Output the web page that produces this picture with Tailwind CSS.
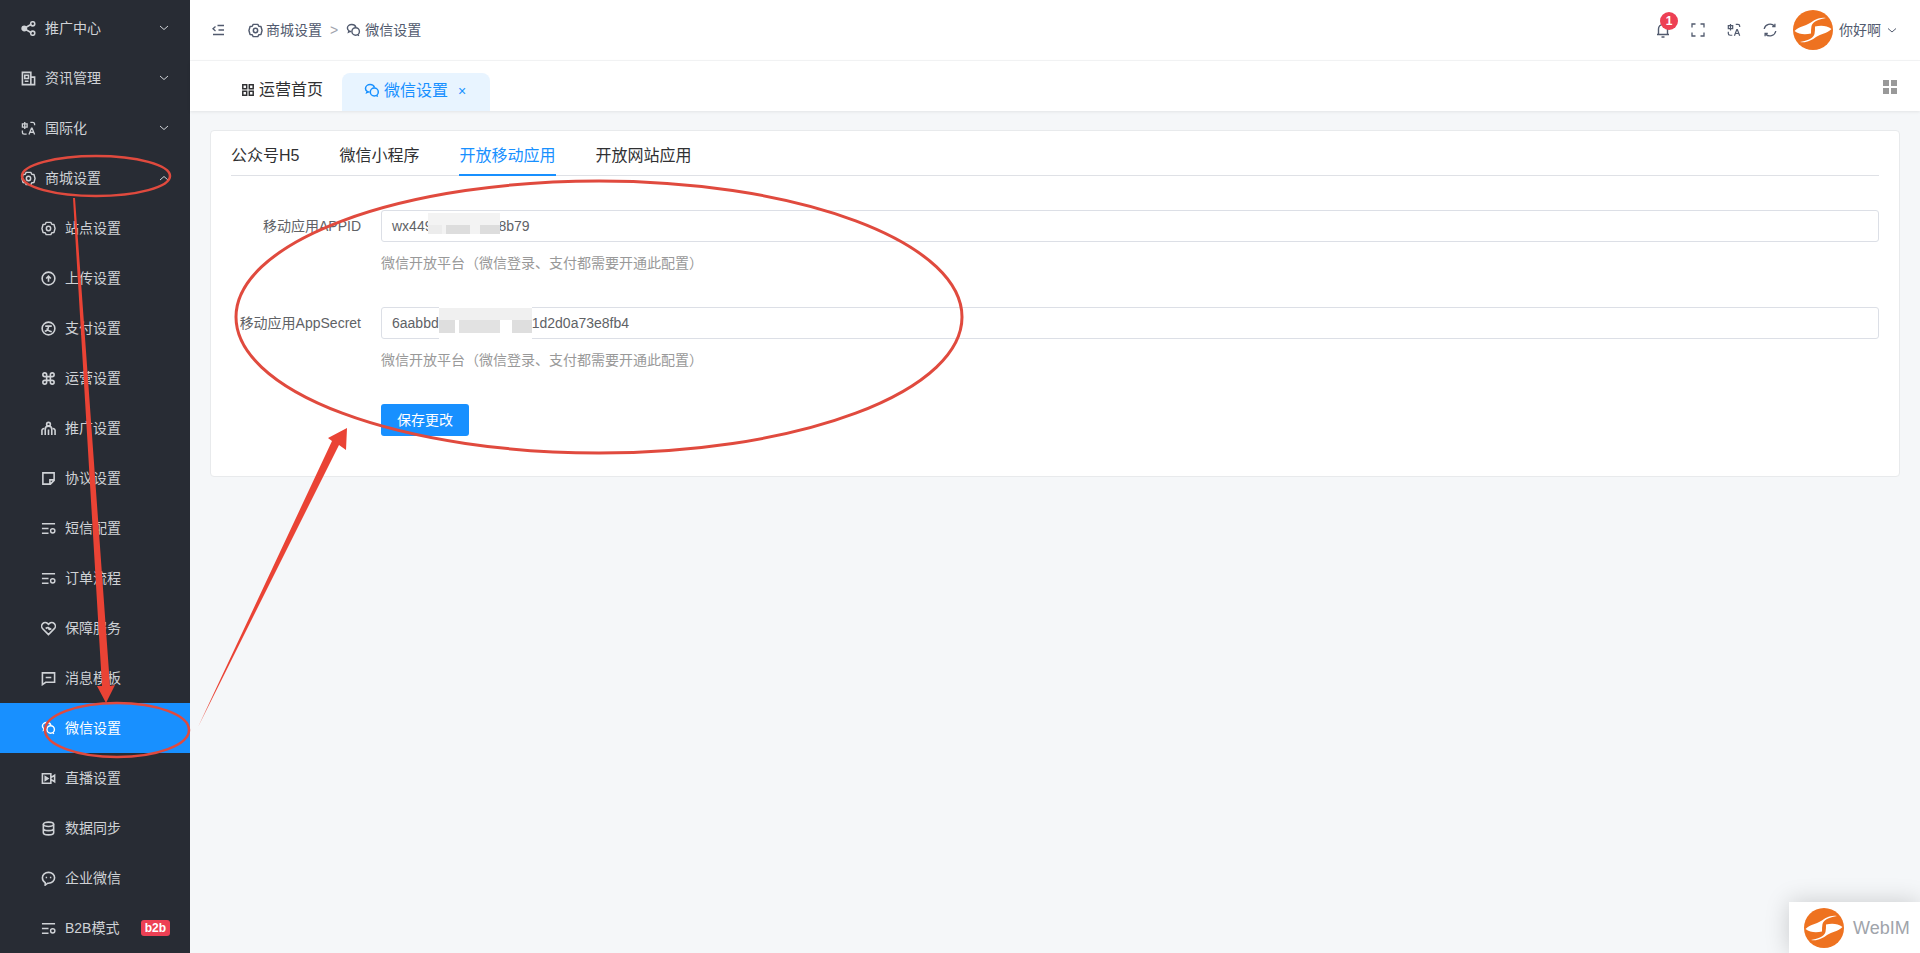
<!DOCTYPE html>
<html lang="zh-CN">
<head>
    <meta charset="UTF-8">
    <title>微信设置</title>
    <script src="https://cdn.jsdelivr.net/npm/@tailwindcss/browser@4"></script>
</head>
<body class="relative h-[953px] w-[1920px] overflow-hidden bg-[#f5f7f9] font-['Liberation_Sans','Noto_Sans_CJK_SC',sans-serif] text-sm">

    <svg class="hidden">
        <symbol id="logo" viewBox="0 0 40 40">
            <circle cx="20" cy="20" r="20" fill="#ee7220"/>
            <path d="M1.500 21C6 16.500 12 16 17 13C21 10 27 6.500 33 8C27 9 20 11 18.500 16C18 18.500 18 21 18 23.500C12 25 6 24.500 1.500 21Z" fill="#fff"/>
            <path d="M1.500 21C6 16.500 12 16 17 13C21 10 27 6.500 33 8C27 9 20 11 18.500 16C18 18.500 18 21 18 23.500C12 25 6 24.500 1.500 21Z" fill="#fff" transform="rotate(180 20 20)"/>
        </symbol>
        <symbol id="wechat" viewBox="0 0 16 16">
            <path d="M10.500 4.600C10 2.800 8.200 1.600 6.100 1.600 3.600 1.600 1.500 3.300 1.500 5.400c0 1.200.6 2.200 1.600 2.900l-.4 1.400 1.700-.8c.4.100.8.200 1.200.2" fill="none" stroke="currentColor" stroke-width="1.500"/>
            <circle cx="10.300" cy="9" r="4" fill="none" stroke="currentColor" stroke-width="1.500"/>
            <path d="M12.800 12.200l.7 1.600" fill="none" stroke="currentColor" stroke-width="1.500"/>
        </symbol>
        <symbol id="gear" viewBox="0 0 16 16">
            <path d="M5.500 1.500h5l1 2 2.300.3L15 8l-1.200 4.200-2.300.3-1 2h-5l-1-2-2.300-.3L1 8l1.200-4.200 2.300-.3z" fill="none" stroke="currentColor" stroke-width="1.500" stroke-linejoin="round"/>
            <circle cx="8" cy="8" r="2.300" fill="none" stroke="currentColor" stroke-width="1.600"/>
        </symbol>
        <symbol id="translate" viewBox="0 0 16 16">
            <g fill="none" stroke="currentColor" stroke-width="1.400">
                <path d="M1.500 3h5v3.500h-5zM4 1v7.500M10 1.500h2.500a2 2 0 0 1 2 2v1M1.500 10v2a2 2 0 0 0 2 2h2.500"/>
                <path d="M8.500 14.500l2.700-7h.6l2.700 7M9.500 12h4"/>
            </g>
        </symbol>
        <symbol id="filter" viewBox="0 0 16 16">
            <g fill="none" stroke="currentColor" stroke-width="1.500">
                <path d="M1 3h14M1 8h7M1 13h7"/>
                <circle cx="12.500" cy="10.500" r="2.300"/>
            </g>
        </symbol>
    </svg>

    <div class="flex h-full">
        <aside class="w-[190px] shrink-0 bg-[#282c34] pt-[3px] text-[#cfd2d6]" id="side-menu"></aside>

        <main class="flex min-w-0 flex-1 flex-col">
            <header class="flex h-[61px] items-center border-b border-[#f4f5f6] bg-white pl-[22px] pr-[24px]">
                <svg class="h-3 w-3 text-[#515a6e]" viewBox="0 0 12 12" fill="none" stroke="currentColor" stroke-width="1.300"><path d="M3.500 2.500L1 4.700l2.500 2.200M5.500 1.500H12M6.500 6H12M1 10.500h11"/></svg>
                <nav class="ml-6 flex items-center text-[#515a6e]">
                    <svg class="mr-[3px] h-[15px] w-[15px]"><use href="#gear"/></svg>
                    <span>商城设置</span>
                    <span class="mx-[8px] text-[#a0a4ad]">&gt;</span>
                    <svg class="mr-[4px] h-[15px] w-[15px]"><use href="#wechat"/></svg>
                    <span>微信设置</span>
                </nav>
                <div class="ml-auto flex items-center text-[#515a6e]">
                    <div class="relative mr-[23px] h-4 w-3">
                        <svg class="h-4 w-[14px]" viewBox="0 0 14 16" fill="none" stroke="currentColor" stroke-width="1.400"><path d="M1 12.500h12M2.500 12.500V7a4.500 4.500 0 0 1 9 0v5.500M5.500 15h3"/></svg>
                        <span class="absolute left-[4px] top-[-10px] flex h-[18px] w-[18px] items-center justify-center rounded-full bg-[#ed4054] text-xs font-bold text-white">1</span>
                    </div>
                    <svg class="mr-[22px] h-[14px] w-[14px]" viewBox="0 0 14 14" fill="none" stroke="currentColor" stroke-width="1.300"><path d="M1 4.500V1h3.500M9.500 1H13v3.500M13 9.500V13H9.500M4.500 13H1V9.500"/></svg>
                    <svg class="mr-[22px] h-[14px] w-[14px]"><use href="#translate"/></svg>
                    <svg class="mr-4 h-[14px] w-[14px]" viewBox="0 0 14 14" fill="none" stroke="currentColor" stroke-width="1.300"><path d="M1.200 6A6 6 0 0 1 11.500 3M12.800 8A6 6 0 0 1 2.500 11"/><path d="M11.900 .8v2.700H9.200M2.100 13.200v-2.700h2.700"/></svg>
                    <svg class="mr-[6px] h-10 w-10"><use href="#logo"/></svg>
                    <span class="mr-[7px]">你好啊</span>
                    <svg class="h-2 w-2" viewBox="0 0 8 8" fill="none" stroke="currentColor" stroke-width="1"><path d="M0 2.500l4 3.500 4-3.500"/></svg>
                </div>
            </header>

            <div class="flex h-[50px] items-end bg-white pl-[52px] pr-[23px] shadow-[0_1px_3px_rgba(0,0,0,0.08)]">
                <div class="mb-[9px] flex items-center text-base text-[#303133]">
                    <svg class="mr-[5px] h-3 w-3" viewBox="0 0 12 12" fill="none" stroke="currentColor" stroke-width="1.500"><path d="M.8.8h3.900v3.900H.8zM7.300.8h3.900v3.900H7.300zM.8 7.300h3.900v3.900H.8zM7.300 7.300h3.900v3.900H7.300z"/></svg>
                    <span>运营首页</span>
                </div>
                <div class="ml-[19px] flex h-[38px] w-[148px] items-center rounded-t-lg bg-[#e8f4ff] pb-[2px] pl-[22px] text-base text-[#1890ff]">
                    <svg class="mr-[4px] h-4 w-4"><use href="#wechat"/></svg>
                    <span>微信设置</span>
                    <span class="ml-[10px] text-sm leading-none">×</span>
                </div>
                <svg class="mb-[17px] ml-auto h-[14px] w-[14px] text-[#999]" viewBox="0 0 14 14" fill="currentColor"><path d="M0 0h6v6H0zM8 0h6v6H8zM0 8h6v6H0zM8 8h6v6H8z"/></svg>
            </div>

            <section class="mx-5 mt-[19px] h-[347px] rounded border border-[#e8eaec] bg-white px-5">
                <div class="flex h-[45px] items-end gap-10 border-b border-[#dfe1e6] text-base text-[#303133]">
                    <span class="h-[31px]">公众号H5</span>
                    <span class="h-[31px]">微信小程序</span>
                    <span class="mb-[-1px] h-[32px] border-b-2 border-[#1890ff] text-[#1890ff]">开放移动应用</span>
                    <span class="h-[31px]">开放网站应用</span>
                </div>

                <form class="mt-[34px] text-[#606266]">
                    <div class="flex">
                        <label class="w-[130px] pt-[6px] text-right">移动应用APPID</label>
                        <div class="ml-5 flex-1">
                            <div class="relative h-8 rounded-[3px] border border-[#dcdfe6] px-[10px] leading-[30px]">
                                wx449<span class="ml-[66px]">8b79</span>
                                <span class="absolute left-[46px] top-[2px] flex h-[21px] w-[72px] items-end bg-[#f3f3f3]">
                                    <span class="h-[9px] w-[14px] bg-[#ececec]"></span>
                                    <span class="ml-[4px] h-[9px] w-[24px] bg-[#dddddd]"></span>
                                    <span class="ml-[10px] h-[9px] w-[20px] bg-[#dddddd]"></span>
                                </span>
                            </div>
                            <p class="mt-[11px] text-[#999]">微信开放平台（微信登录、支付都需要开通此配置）</p>
                        </div>
                    </div>
                    <div class="mt-[34px] flex">
                        <label class="w-[130px] pt-[6px] text-right">移动应用AppSecret</label>
                        <div class="ml-5 flex-1">
                            <div class="relative h-8 rounded-[3px] border border-[#dcdfe6] px-[10px] leading-[30px]">
                                6aabbd<span class="ml-[93px]">1d2d0a73e8fb4</span>
                                <span class="absolute left-[57px] top-[-8px] flex h-[39px] w-[93px] flex-col justify-start bg-white pt-[8px]">
                                    <span class="h-[12px] w-full bg-[#f0f0f0]"></span>
                                    <span class="flex h-[13px] w-full gap-[4px]">
                                        <span class="w-[16px] bg-[#dedede]"></span>
                                        <span class="w-[42px] bg-[#e2e2e2]"></span>
                                        <span class="ml-[8px] w-[20px] bg-[#dedede]"></span>
                                    </span>
                                </span>
                            </div>
                            <p class="mt-[11px] text-[#999]">微信开放平台（微信登录、支付都需要开通此配置）</p>
                        </div>
                    </div>
                    <button type="button" class="ml-[150px] mt-[34px] h-8 w-[88px] rounded-[3px] bg-[#1890ff] text-white">保存更改</button>
                </form>
            </section>
        </main>
    </div>

    <!-- floating chat entry -->
    <div class="absolute bottom-0 right-0 flex h-[51px] w-[131px] items-center bg-white pl-[15px] shadow-[0_0_24px_rgba(0,0,0,0.18)]">
        <svg class="h-10 w-10"><use href="#logo"/></svg>
        <span class="ml-[9px] text-lg text-[#a0a4ab]">WebIM</span>
    </div>

    <!-- hand drawn annotations on top of the screenshot -->
    <svg class="pointer-events-none absolute left-0 top-0 h-[953px] w-[1920px]" viewBox="0 0 1920 953" fill="none">
        <g stroke="#e04a3e" stroke-width="2.500">
            <ellipse cx="96" cy="176" rx="74" ry="20"/>
            <ellipse cx="117" cy="730" rx="72" ry="27"/>
            <ellipse cx="599" cy="317" rx="363" ry="136" stroke-width="3"/>
        </g>
        <g fill="#ea4335">
            <path d="M73 198L75 198L110 686L115 685L106 703L97 686L102 686Z"/>
            <path d="M198 727L332 441L328 438L347 428L346 450L339 445Z"/>
        </g>
    </svg>

    <script>
        const icons = {
            share: '<circle cx="3.500" cy="8" r="2.300" fill="currentColor"/><circle cx="12.500" cy="3" r="2.200"/><circle cx="12.500" cy="13" r="2.200"/><path d="M5 7l6-3.500M5 9l6 3.500"/>',
            news: '<path d="M1.500 1.500h9v13h-9zM10.500 6.500h4v8h-4M4 4.500h4v3.500H4zM4 11h4"/>',
            translate: '<use href="#translate"/>',
            gear: '<use href="#gear"/>',
            upload: '<circle cx="8" cy="8" r="6.800"/><path d="M8 11.500V5.500M5.500 8L8 5.500 10.500 8"/>',
            pay: '<circle cx="8" cy="8" r="6.800"/><path d="M4.500 5.500h7M8 5.500c0 3-2 5-4 5.500M6 8c1 2 3 3 5.500 3.500"/>',
            cmd: '<path d="M6 6h4v4H6zM6 6V4a2 2 0 1 0-2 2h2M10 6V4a2 2 0 1 1 2 2h-2M6 10v2a2 2 0 1 1-2-2h2M10 10v2a2 2 0 1 0 2-2h-2"/>',
            people: '<circle cx="8" cy="3.500" r="2"/><path d="M4.500 15V9a3.500 3.500 0 0 1 7 0v6M8 9v6M1 15v-4A2.500 2.500 0 0 1 3.500 8M15 15v-4A2.500 2.500 0 0 0 12.500 8"/>',
            note: '<path d="M2 2h12v8l-4 4H2zM14 9.500h-4.500V14"/>',
            filter: '<use href="#filter"/>',
            heart: '<path d="M8 14.500L1.800 8.200a3.800 3.800 0 0 1 5.400-5.400l.8.800.8-.8a3.800 3.800 0 0 1 5.400 5.400zM5 8c2-1.500 4-1 3.500 0S9 9.500 11 8"/>',
            message: '<path d="M1.500 2h13v10H5l-3.500 2.500zM5 7h6"/>',
            wechat: '<use href="#wechat"/>',
            video: '<path d="M1.500 3h9v10h-9zM10.500 7l4-2.500v7l-4-2.500"/><path d="M4.500 6v4l3-2z" fill="currentColor"/>',
            db: '<ellipse cx="8" cy="3.500" rx="5.500" ry="2.300"/><path d="M2.500 3.500v9c0 1.300 2.500 2.300 5.500 2.300s5.500-1 5.500-2.300v-9M2.500 8c0 1.300 2.500 2.300 5.500 2.300s5.500-1 5.500-2.300"/>',
            chat: '<path d="M8 1.500c3.600 0 6.500 2.500 6.500 5.700S11.600 13 8 13h-.8l-2.700 2v-2.600C2.800 11.400 1.500 9.500 1.500 7.200 1.500 4 4.400 1.500 8 1.500zM5 7h1.500M9.500 7H11"/>',
        };

        // level 0 rows have a chevron, level 1 rows are indented under 商城设置
        const menu = [
            { name: '推广中心', icon: 'share', top: true },
            { name: '资讯管理', icon: 'news', top: true },
            { name: '国际化', icon: 'translate', top: true },
            { name: '商城设置', icon: 'gear', top: true, open: true },
            { name: '站点设置', icon: 'gear' },
            { name: '上传设置', icon: 'upload' },
            { name: '支付设置', icon: 'pay' },
            { name: '运营设置', icon: 'cmd' },
            { name: '推广设置', icon: 'people' },
            { name: '协议设置', icon: 'note' },
            { name: '短信配置', icon: 'filter' },
            { name: '订单流程', icon: 'filter' },
            { name: '保障服务', icon: 'heart' },
            { name: '消息模板', icon: 'message' },
            { name: '微信设置', icon: 'wechat', active: true },
            { name: '直播设置', icon: 'video' },
            { name: '数据同步', icon: 'db' },
            { name: '企业微信', icon: 'chat' },
            { name: 'B2B模式', icon: 'filter', badge: 'b2b' },
        ];

        document.getElementById('side-menu').innerHTML = menu.map(item => {
            const pad = item.top ? 'pl-[21px]' : 'pl-[41px]';
            const bg = item.active ? 'bg-[#1890ff] text-white' : '';
            const chevron = item.top
                ? `<svg class="ml-auto mr-[20px] h-2 w-3" viewBox="0 0 12 8" fill="none" stroke="currentColor"><path d="${item.open ? 'M2 6l4-3.500 4 3.500' : 'M2 2l4 3.500 4-3.500'}"/></svg>`
                : '';
            const badge = item.badge
                ? `<span class="ml-auto mr-5 rounded-[3px] bg-[#ed4054] px-[4px] text-xs font-bold leading-4 text-white">${item.badge}</span>`
                : '';
            return `<div class="flex h-[50px] items-center ${pad} ${bg}">
                <svg class="mr-[9px] h-[15px] w-[15px]" viewBox="0 0 16 16" fill="none" stroke="currentColor" stroke-width="1.700">${icons[item.icon]}</svg>
                <span>${item.name}</span>${chevron}${badge}
            </div>`;
        }).join('');
    </script>
</body>
</html>
